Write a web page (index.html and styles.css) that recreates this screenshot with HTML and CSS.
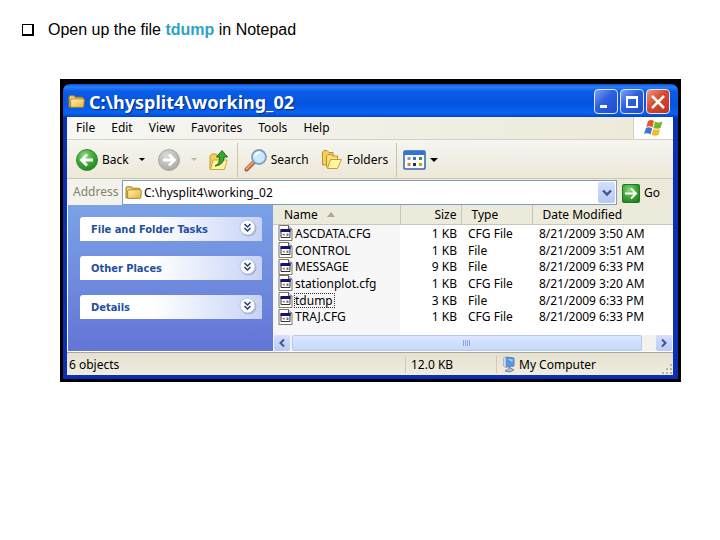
FILE: index.html
```html
<!DOCTYPE html>
<html lang="en">
<head>
<meta charset="utf-8">
<title>Open up the file tdump</title>
<link rel="stylesheet" href="styles.css">
</head>
<body>
<svg class="defs" width="0" height="0" aria-hidden="true">
  <defs>
    <linearGradient id="gold" x1="0" y1="0" x2="1" y2="1"><stop offset="0" stop-color="#fff6b0"/><stop offset="1" stop-color="#e3b23c"/></linearGradient>
    <radialGradient id="green" cx=".4" cy=".3" r=".8"><stop offset="0" stop-color="#8fdc80"/><stop offset=".5" stop-color="#3fa836"/><stop offset="1" stop-color="#1f7d1c"/></radialGradient>
    <radialGradient id="grey" cx=".4" cy=".3" r=".8"><stop offset="0" stop-color="#dcdcd8"/><stop offset="1" stop-color="#a3a3a0"/></radialGradient>
    <symbol id="folder" viewBox="0 0 16 14">
      <path d="M1 12V2.500Q1 1.500 2 1.500H5.500L7 3H13Q14 3 14 4V12Z" fill="#f3d370" stroke="#a87b1d"/>
      <path d="M2.500 12.500L2.500 5.500Q2.700 4.500 3.500 4.500H14.500Q15.500 4.500 15.400 5.500L14.900 11.500Q14.800 12.500 13.900 12.500Z" fill="url(#gold)" stroke="#a87b1d" stroke-width=".8"/>
    </symbol>
    <symbol id="file" viewBox="0 0 14 16">
      <path d="M.500.500H10L13.500 4V15.500H.500Z" fill="#fff" stroke="#77776c"/>
      <path d="M10 .500V4H13.500" fill="#ddd" stroke="#555"/>
      <path d="M2.500 5H11.500V12.500H2.500Z" fill="#fff" stroke="#333"/>
      <path d="M2 4H12V7H2Z" fill="#12127a"/>
      <path d="M4 9.500L6 8.500V11Z" fill="#b3263b"/><path d="M8 8.500H10V11H8Z" fill="#3b8a8a"/>
    </symbol>
    <symbol id="chevrons" viewBox="0 0 18 18">
      <circle cx="9.500" cy="9.500" r="8" fill="#8d9cc9" opacity=".6"/>
      <circle cx="8.500" cy="8.500" r="7.500" fill="#fff" stroke="#b8c3e2"/>
      <path d="M5.500 5L8.500 8L11.500 5M5.500 9L8.500 12L11.500 9" fill="none" stroke="#1d3f78" stroke-width="1.500"/>
    </symbol>
  </defs>
</svg>

<p class="step"><span class="box" aria-hidden="true"></span><span>Open up the file <strong>tdump</strong> in Notepad</span></p>

<main class="stage">
<section class="window">
  <header class="titlebar">
    <svg class="title-icon"><use href="#folder"/></svg>
    <h1>C:\hysplit4\working_02</h1>
    <button class="caption" type="button" aria-label="Minimize"><svg width="16" height="16"><path d="M2 11H9V14H2Z" fill="#fff"/></svg></button>
    <button class="caption" type="button" aria-label="Maximize"><svg width="16" height="16"><path d="M3 3H13V13H3Z" fill="none" stroke="#fff" stroke-width="2"/><path d="M2 2H14V5H2Z" fill="#fff"/></svg></button>
    <button class="caption close" type="button" aria-label="Close"><svg width="16" height="16"><path d="M2 2L14 14M14 2L2 14" stroke="#fff" stroke-width="2.500"/></svg></button>
  </header>

  <nav class="menubar">
    <button type="button">File</button><button type="button">Edit</button><button type="button">View</button><button type="button">Favorites</button><button type="button">Tools</button><button type="button">Help</button>
    <span class="flag"><svg width="22" height="20" viewBox="0 0 22 20">
      <path d="M5 3Q8 1 11 3L9.500 9.500Q6.500 7.500 3.200 9Z" fill="#e8562b"/>
      <path d="M12 3.500Q15.500 5.500 19.500 3.500L17.500 10Q14 11.500 10.500 10Z" fill="#72b733"/>
      <path d="M3 10Q6 8.500 9.200 10.500L7.500 16.500Q4.500 14.500 1 16Z" fill="#3b75cf"/>
      <path d="M10.200 11Q13.500 12.500 17.200 11L15.500 17Q12 18.500 8.500 17Z" fill="#f4bc27"/>
    </svg></span>
  </nav>

  <div class="toolbar">
    <button type="button"><svg width="24" height="24"><circle cx="12" cy="12" r="10.500" fill="url(#green)" stroke="#3c8a38"/><path d="M18 12H7M12 6.500L6.500 12L12 17.500" fill="none" stroke="#fff" stroke-width="2.800"/></svg>Back</button>
    <button class="drop" type="button" aria-label="Back history"><svg width="6" height="4"><path d="M0 0H6L3 3Z"/></svg></button>
    <button class="forward" type="button" aria-label="Forward" disabled><svg width="24" height="24"><circle cx="12" cy="12" r="10.500" fill="url(#grey)" stroke="#a9a9a6"/><path d="M6 12H17M12 6.500L17.500 12L12 17.500" fill="none" stroke="#fff" stroke-width="2.800"/></svg></button>
    <button class="drop" type="button" aria-label="Forward history" disabled><svg width="6" height="4"><path d="M0 0H6L3 3Z" fill="#b9b7aa"/></svg></button>
    <button class="up" type="button" aria-label="Up"><svg width="20" height="24">
      <path d="M1 21V8L3 6H7L9 8H15V21Z" fill="#f2d060" stroke="#c39a2f"/><path d="M1.500 21.500L4 12H18L15.500 21.500Z" fill="#fff3a4" stroke="#d0a93a"/>
      <path d="M6 18Q11 16 10.500 9H7.500L13 2.500L18.500 9H15Q15 17 6 18Z" fill="#37a82d" stroke="#1c731a"/>
    </svg></button>
    <span class="rule"></span>
    <button class="search" type="button"><svg width="24" height="24"><path d="M2.500 21.500L10 14" stroke="#a65b2f" stroke-width="4" stroke-linecap="round"/><path d="M2.500 21L9.500 14" stroke="#efa46f" stroke-width="2" stroke-linecap="round"/><circle cx="15" cy="9" r="7" fill="#cbe9fb" stroke="#7b9fc6" stroke-width="1.800"/><path d="M11 8Q12 4.500 16 4.500" fill="none" stroke="#fff" stroke-width="2"/></svg>Search</button>
    <button class="folders" type="button"><svg width="22" height="22">
      <path d="M1.500 16V3L3 1.500H6L8 3.500H12V16Z" fill="#f4cf5e" stroke="#c08f22"/><path d="M5.500 18V7L7 5.500H10L11.500 7H16.500V18Z" fill="#f9df7b" stroke="#c08f22"/><path d="M6.500 19.500L9.500 10.500H20.500L16.500 19.500Z" fill="#fff3a4" stroke="#c89c2e"/>
    </svg>Folders</button>
    <span class="rule"></span>
    <button class="views" type="button" aria-label="Views"><svg width="24" height="20"><rect x="1" y="1" width="21" height="18" rx="1" fill="#fff" stroke="#2c63b5" stroke-width="1.500"/><path d="M1 1H22V5H1Z" fill="#2f75d6"/>
      <path d="M4.500 7H7.500V10H4.500Z" fill="#8d98b0"/><path d="M10 7H13V10H10Z" fill="#3c71bd"/><path d="M16 7H19V10H16Z" fill="#3a9440"/><path d="M4.500 13H7.500V16H4.500Z" fill="#d97a4a"/><path d="M10 13H13V16H10Z" fill="#17346d"/><path d="M16 13H19V16H16Z" fill="#c7a02c"/></svg><svg width="8" height="5"><path d="M0 0H8L4 4Z"/></svg></button>
  </div>

  <form class="address">
    <label for="path">Address</label>
    <div class="combo">
      <svg class="path-icon"><use href="#folder"/></svg>
      <input id="path" type="text" value="C:\hysplit4\working_02">
      <button class="arrow" type="button" aria-label="Show addresses"><svg width="10" height="8"><path d="M1 1.500L5 5.500L9 1.500" fill="none" stroke="#3d5788" stroke-width="2.400"/></svg></button>
    </div>
    <button class="go" type="button"><svg width="18" height="19"><rect x=".500" y=".500" width="17" height="18" rx="1" fill="url(#green)" stroke="#26752a"/><path d="M3 9.500H14M9 4.500L14 9.500L9 14.500" fill="none" stroke="#fff" stroke-width="2"/></svg>Go</button>
  </form>

  <div class="body">
    <aside class="tasks">
      <button type="button">File and Folder Tasks<svg><use href="#chevrons"/></svg></button>
      <button type="button">Other Places<svg><use href="#chevrons"/></svg></button>
      <button type="button">Details<svg><use href="#chevrons"/></svg></button>
    </aside>
    <div class="listing">
      <table>
        <colgroup><col class="c-name"><col class="c-size"><col class="c-type"><col></colgroup>
        <thead><tr><th>Name<svg class="sort" width="8" height="5"><path d="M0 5L4 0L8 5Z" fill="#aca899"/></svg></th><th class="size">Size</th><th>Type</th><th>Date Modified</th></tr></thead>
        <tbody>
          <tr><td><svg><use href="#file"/></svg><span>ASCDATA.CFG</span></td><td>1 KB</td><td>CFG File</td><td>8/21/2009 3:50 AM</td></tr>
          <tr><td><svg><use href="#file"/></svg><span>CONTROL</span></td><td>1 KB</td><td>File</td><td>8/21/2009 3:51 AM</td></tr>
          <tr><td><svg><use href="#file"/></svg><span>MESSAGE</span></td><td>9 KB</td><td>File</td><td>8/21/2009 6:33 PM</td></tr>
          <tr><td><svg><use href="#file"/></svg><span>stationplot.cfg</span></td><td>1 KB</td><td>CFG File</td><td>8/21/2009 3:20 AM</td></tr>
          <tr><td><svg><use href="#file"/></svg><span class="focused">tdump</span></td><td>3 KB</td><td>File</td><td>8/21/2009 6:33 PM</td></tr>
          <tr><td><svg><use href="#file"/></svg><span>TRAJ.CFG</span></td><td>1 KB</td><td>CFG File</td><td>8/21/2009 6:33 PM</td></tr>
        </tbody>
      </table>
      <div class="filler"></div>
      <div class="scrollbar">
        <button type="button" aria-label="Scroll left"><svg width="8" height="10"><path d="M6 1.500L2.500 5L6 8.500" fill="none" stroke="#3d5788" stroke-width="2"/></svg></button>
        <div class="thumb"><svg width="8" height="7"><path d="M.500 0V6M2.500 0V6M4.500 0V6M6.500 0V6" stroke="#8ca6dc"/></svg></div>
        <button type="button" aria-label="Scroll right"><svg width="8" height="10"><path d="M2 1.500L5.500 5L2 8.500" fill="none" stroke="#3d5788" stroke-width="2"/></svg></button>
      </div>
    </div>
  </div>

  <footer class="status">
    <span class="count">6 objects</span>
    <span class="total">12.0 KB</span>
    <span class="zone"><svg width="14" height="17"><path d="M4 1L12 2V10L4 11Z" fill="#4d9bea" stroke="#6c83a8"/><path d="M1.500 2L4 1V12L1.500 10Z" fill="#d5dce8" stroke="#8793aa" stroke-width=".500"/><path d="M7 11V13L3 15L8 16L12 14Z" fill="#b6bdd0" stroke="#7c86a0"/><path d="M5.500 3L10.500 3.500V6Z" fill="#a9daff"/></svg>My Computer</span>
    <svg class="grip" width="13" height="13"><path d="M10 2H12V4H10ZM6 6H8V8H6ZM10 6H12V8H10ZM2 10H4V12H2ZM6 10H8V12H6ZM10 10H12V12H10Z" fill="#b8b4a3"/></svg>
  </footer>
</section>
</main>
</body>
</html>
```
FILE: styles.css
```css
* { box-sizing: border-box; }

body {
  margin: 0;
  background: #fff;
  color: #000;
  font: 12px/16px "Noto Sans", "DejaVu Sans", sans-serif;
}

button, input {
  margin: 0;
  padding: 0;
  border: 0;
  background: none;
  color: inherit;
  font: inherit;
}

svg { display: block; flex: none; }
.defs { position: absolute; }

.step {
  display: flex;
  align-items: center;
  gap: 14px;
  margin: 20px 22px 0;
  font: 16px/20px "Liberation Sans", Arial, sans-serif;
}
.step strong { color: #2ea3c6; }
.box {
  width: 12px;
  height: 12px;
  border: solid #000;
  border-width: 1px 2px 2px 1px;
}

.stage {
  margin: 39px 39px 0 60px;
  padding: 5px 3px 3px;
  background: #000;
}
.window {
  padding: 0 5px 4px 4px;
  border-radius: 7px 7px 0 0;
  background: #0831b5;
}

.titlebar {
  display: flex;
  align-items: center;
  gap: 2px;
  height: 33px;
  margin: 0 -5px 0 -4px;
  padding: 2px 8px 0 5px;
  border-radius: 7px 7px 0 0;
  background: linear-gradient(#0a50d8, #2a80f8 9%, #0a5ce6 22%, #0454e0 60%, #0862f2 88%, #0344c4);
}
.title-icon { width: 17px; height: 15px; }
h1 {
  flex: 1;
  margin: 0 0 0 2px;
  color: #fff;
  font: bold 18px/24px "Noto Sans", sans-serif;
  text-shadow: 1px 1px 1px #0a2a80;
}
.caption {
  display: grid;
  place-items: center;
  width: 24px;
  height: 25px;
  border: 1px solid #dde6fb;
  border-radius: 4px;
  background: linear-gradient(135deg, #7fa0f2, #2c5fe0 45%, #1c4cc9);
}
.close { background: linear-gradient(135deg, #ec9a83, #d8492c 45%, #b8361b); }

.menubar {
  display: flex;
  align-items: center;
  gap: 16px;
  height: 23px;
  padding-left: 9px;
  border-bottom: 1px solid #d5d1bf;
  background: linear-gradient(90deg, #f7f7f5, #ece9d8);
}
.flag {
  display: grid;
  place-items: center;
  align-self: stretch;
  width: 40px;
  margin-left: auto;
  border-left: 1px solid #d5d1bf;
  background: #fff;
}

.toolbar {
  display: flex;
  align-items: center;
  height: 39px;
  padding: 2px 0 0 8px;
  border-bottom: 1px solid #cbc7b5;
  background: linear-gradient(#f6f5f0, #ece9d8);
}
.toolbar button { display: flex; align-items: center; gap: 3px; }
.toolbar .drop { margin-left: 10px; }
.toolbar .forward { margin-left: 12px; }
.toolbar .up { margin-left: 12px; }
.rule {
  width: 1px;
  height: 34px;
  margin: 0 6px 0 8px;
  background: #c9c5b2;
}
.toolbar .folders { margin-left: 12px; gap: 4px; }

.address {
  display: flex;
  align-items: center;
  height: 26px;
  padding-left: 6px;
  background: linear-gradient(90deg, #f3f2ec, #ece9d8);
}
.address label { width: 49px; color: #85836f; }
.combo {
  display: flex;
  flex: 1;
  align-items: center;
  height: 25px;
  padding: 1px 1px 0 2px;
  border: 1px solid #7f9db9;
  background: #fff;
}
.path-icon { width: 17px; height: 15px; }
.combo input { flex: 1; min-width: 0; margin-left: 2px; outline: 0; }
.arrow {
  display: grid;
  place-items: center;
  width: 17px;
  height: 21px;
  border-radius: 2px;
  background: linear-gradient(#d3dffd, #b5c9f6);
}
.go { display: flex; align-items: center; gap: 4px; width: 56px; padding: 2px 0 0 5px; }

.body { display: flex; height: 147px; border-left: 1px solid #fff; border-bottom: 1px solid #fff; }
.tasks {
  display: flex;
  flex-direction: column;
  gap: 15px;
  width: 205px;
  padding: 12px 11px 0 12px;
  background: linear-gradient(#7ba2e7, #6375d6);
}
.tasks button {
  display: flex;
  align-items: center;
  justify-content: space-between;
  height: 24px;
  padding: 2px 5px 0 11px;
  border-radius: 3px 3px 0 0;
  background: linear-gradient(90deg, #fff 40%, #c6d3f7);
  color: #24509f;
  font: bold 11px/16px "DejaVu Sans Condensed", "DejaVu Sans", sans-serif;
}
.tasks svg { width: 18px; height: 18px; margin-top: -4px; }

.listing { display: flex; flex: 1; flex-direction: column; min-width: 0; background: #fff; }
table { width: 100%; border-collapse: collapse; table-layout: fixed; }
.c-name { width: 127px; }
.c-size { width: 61px; }
.c-type { width: 71px; }
th {
  height: 19px;
  padding: 2px 0 0 10px;
  border-right: 1px solid #cbc7b8;
  border-bottom: 1px solid #cbc7b8;
  background: #ebeadb;
  font-weight: normal;
  line-height: 16px;
  text-align: left;
  white-space: nowrap;
}
th:first-child { padding-left: 11px; }
th:last-child { border-right: 0; }
th.size { padding: 2px 4px 0 0; text-align: right; }
.sort { display: inline-block; margin: 0 0 2px 9px; }
td { height: 17px; padding: 0 0 0 7px; line-height: 15px; white-space: nowrap; }
tbody tr:nth-child(3n) td { height: 16px; }
td:first-child { display: flex; align-items: center; gap: 1px; padding-left: 5px; background: #f7f7f7; }
td:nth-child(2) { padding: 0 4px 0 0; text-align: right; }
td svg { width: 15px; height: 16px; }
td span { padding: 0 1px; }
.focused { padding-right: 2px; outline: 1px dotted #333; outline-offset: -1px; }
.filler { flex: 1; width: 127px; background: #f7f7f7; }

.scrollbar {
  display: flex;
  gap: 2px;
  height: 16px;
  padding: 0 1px;
  background: #f3f3ee;
}
.scrollbar button {
  display: grid;
  place-items: center;
  width: 16px;
  border-radius: 2px;
  background: linear-gradient(#d3dffd, #b9cbf6);
}
.thumb {
  display: grid;
  place-items: center;
  flex: 1;
  margin-right: 12px;
  border: 1px solid #b4c8f2;
  border-radius: 2px;
  background: linear-gradient(#dbe8ff, #c6d8fb);
}

.status {
  display: flex;
  align-items: center;
  height: 23px;
  padding-top: 1px;
  border-top: 1px solid #aaa797;
  background: linear-gradient(#e4e1d0, #f0eddf);
}
.count { flex: 1; padding-left: 2px; }
.total { width: 91px; padding-left: 5px; border-left: 1px solid #cfcbb9; }
.zone {
  display: flex;
  align-items: center;
  gap: 3px;
  width: 164px;
  padding-left: 5px;
  border-left: 1px solid #cfcbb9;
}
.grip { align-self: flex-end; }
```
